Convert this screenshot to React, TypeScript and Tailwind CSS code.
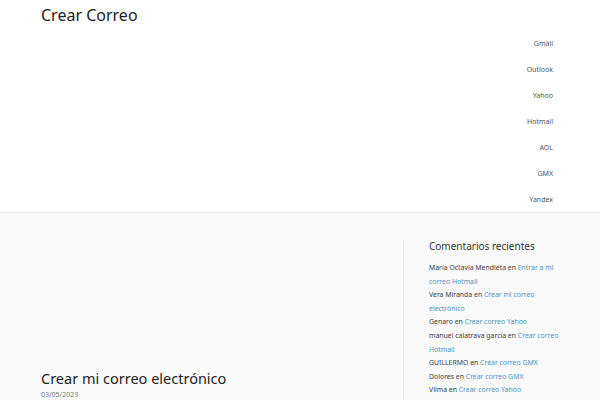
const nav = ['Gmail', 'Outlook', 'Yahoo', 'Hotmail', 'AOL', 'GMX', 'Yandex']

const comments = [
  { author: 'María Octavia Mendieta', post: 'Entrar a mi correo Hotmail' },
  { author: 'Vera Miranda', post: 'Crear mi correo electrónico' },
  { author: 'Genaro', post: 'Crear correo Yahoo' },
  { author: 'manuel calatrava garcia', post: 'Crear correo Hotmail' },
  { author: 'GUILLERMO', post: 'Crear correo GMX' },
  { author: 'Dolores', post: 'Crear correo GMX' },
  { author: 'Vilma', post: 'Crear correo Yahoo' },
]

export default function App() {
  return (
    <div className="h-[400px] w-[600px] overflow-hidden bg-[#fafafa] font-['Noto_Sans',sans-serif]">
      <header className="h-[213px] border-b border-[#ededed] bg-white px-[41px]">
        <div className="pt-[4px] text-[16px] leading-[22px] text-[#222]">Crear Correo</div>
        <nav className="mt-[12px] flex flex-col items-end pr-[6px]">
          {nav.map((n) => (
            <a key={n} className="h-[26px] text-[7px] leading-[11px] text-[#555]">
              {n}
            </a>
          ))}
        </nav>
      </header>
      <main className="flex px-[41px]">
        <div className="flex w-[362px] shrink-0 flex-col pt-[155px]">
          <h2 className="text-[14.5px] leading-[20px] text-[#222]">Crear mi correo electrónico</h2>
          <div className="mt-[2px] text-[7px] leading-[10px] text-[#777]">03/05/2023</div>
        </div>
        <aside className="mt-[27px] w-[160px] shrink-0 border-l border-[#ececec] pl-[25px]">
          <h3 className="text-[10px] leading-[12px] text-[#333]">Comentarios recientes</h3>
          <ul className="mt-[9px] w-[132px] text-[6.9px] leading-[13.6px] text-[#3a3a3a]">
            {comments.map((c, i) => (
              <li key={i}>
                {c.author} en <a className="text-[#4a93c4]">{c.post}</a>
              </li>
            ))}
          </ul>
        </aside>
      </main>
    </div>
  )
}
